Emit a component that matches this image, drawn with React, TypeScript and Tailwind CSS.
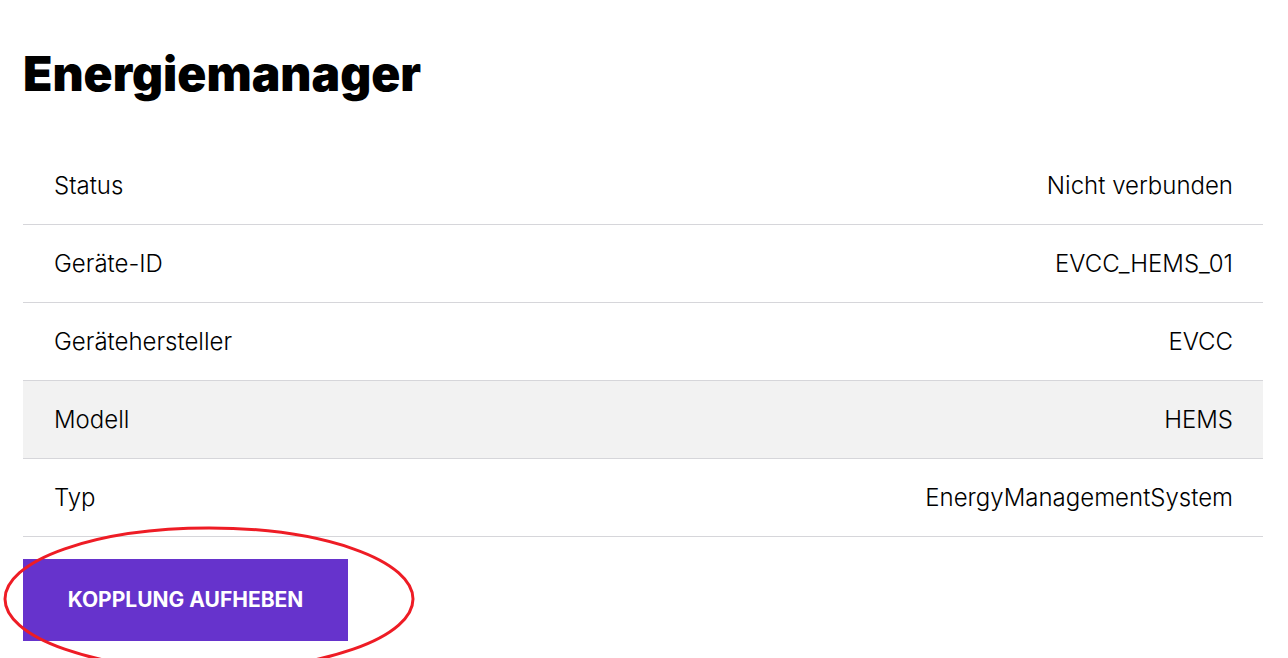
const rows = [
  { label: 'Status', value: 'Nicht verbunden' },
  { label: 'Geräte-ID', value: 'EVCC_HEMS_01' },
  { label: 'Gerätehersteller', value: 'EVCC' },
  { label: 'Modell', value: 'HEMS', hover: true },
  { label: 'Typ', value: 'EnergyManagementSystem' },
];

export default function App() {
  return (
    <div className="relative min-h-screen bg-white pl-[23px] pr-[25px] pt-[42px] font-['Inter',sans-serif] text-black overflow-hidden">
      <h1 className="text-[48px] font-black leading-[64px]">Energiemanager</h1>

      <div className="mt-[41px]">
        {rows.map((r) => (
          <div
            key={r.label}
            className={`flex h-[78px] items-center justify-between border-b border-[#d6d6da] pl-[31px] pr-[30px] text-[24px] font-light ${
              r.hover ? 'bg-[#f2f2f2]' : ''
            }`}
          >
            <span>{r.label}</span>
            <span>{r.value}</span>
          </div>
        ))}
      </div>

      <button className="mt-[22px] flex h-[82px] w-[325px] items-center justify-center bg-[#6633cc] text-[21px] font-bold uppercase text-white">
        Kopplung aufheben
      </button>

      {/* red annotation */}
      <svg className="pointer-events-none absolute left-0 top-0" width="1288" height="658">
        <ellipse cx="209" cy="599" rx="204" ry="71" fill="none" stroke="#ee1c25" strokeWidth="3" />
      </svg>
    </div>
  );
}
